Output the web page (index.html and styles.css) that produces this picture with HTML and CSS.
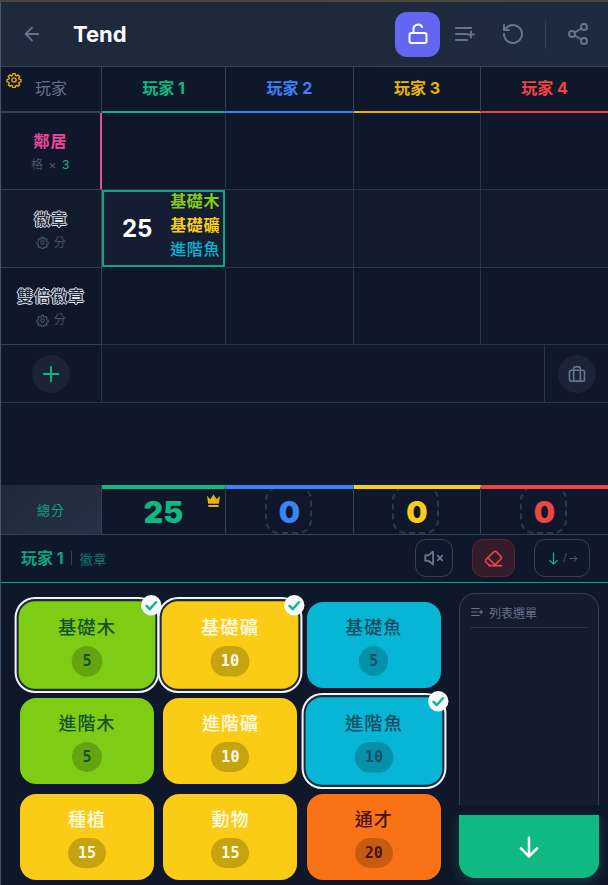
FILE: index.html
```html
<!DOCTYPE html>
<html lang="zh-Hant">
<head>
<meta charset="utf-8">
<title>Tend</title>
<link rel="stylesheet" href="styles.css">
</head>
<body>
<div class="app">
  <header class="topbar">
    <button class="icon-btn back"><svg viewBox="0 0 24 24" width="22" height="22" class="stroke"><path d="M19 12H5M12 19l-7-7 7-7"/></svg></button>
    <h1 class="title">Tend</h1>
    <button class="lock"><svg viewBox="0 0 24 24" width="24" height="24" class="stroke white"><rect x="3.500" y="11" width="17" height="10" rx="2"/><path d="M7.500 11V7a4.500 4.500 0 0 1 8.600-1.800"/></svg></button>
    <button class="icon-btn list"><svg viewBox="0 0 24 24" width="24" height="24" class="stroke"><path d="M3 6h15M3 12h11M3 18h11M18 9.500v6M15 12.500h6"/></svg></button>
    <button class="icon-btn undo"><svg viewBox="0 0 24 24" width="24" height="24" class="stroke"><path d="M3 12a9 9 0 1 0 3-6.700L3 8"/><path d="M3 3v5h5"/></svg></button>
    <span class="bar-div"></span>
    <button class="icon-btn share"><svg viewBox="0 0 24 24" width="24" height="24" class="stroke"><circle cx="18" cy="5" r="3"/><circle cx="6" cy="12" r="3"/><circle cx="18" cy="19" r="3"/><path d="M8.600 13.500l6.800 4M15.400 6.500l-6.800 4"/></svg></button>
  </header>

  <div class="row head-row">
    <div class="cell corner">
      <svg class="gear-top" viewBox="0 0 24 24" width="16" height="16"><path d="M10.300 2.500h3.400l.5 2.700 1.700.7 2.300-1.500 2.400 2.400-1.500 2.300.7 1.700 2.700.5v3.400l-2.700.5-.7 1.700 1.500 2.300-2.400 2.400-2.300-1.500-1.700.7-.5 2.700h-3.400l-.5-2.700-1.700-.7-2.300 1.500-2.400-2.400 1.500-2.300-.7-1.700-2.700-.5v-3.400l2.700-.5.7-1.700-1.500-2.300 2.400-2.400 2.300 1.500 1.700-.7z"/><circle cx="12" cy="12" r="3.200"/></svg>
      <span>玩家</span>
    </div>
    <div class="cell ph c-green">玩家 1</div>
    <div class="cell ph c-blue">玩家 2</div>
    <div class="cell ph c-yellow">玩家 3</div>
    <div class="cell ph c-red">玩家 4</div>
  </div>

  <div class="row r1">
    <div class="cell label pink-edge">
      <div class="name pink">鄰居</div>
      <div class="sub">格 <i>×</i> <b>3</b></div>
    </div>
    <div class="cell"></div><div class="cell"></div><div class="cell"></div><div class="cell"></div>
  </div>

  <div class="row r2">
    <div class="cell label">
      <div class="name outline">徽章</div>
      <div class="sub"><svg class="mini-gear" viewBox="0 0 24 24" width="13" height="13"><path d="M10.300 2.500h3.400l.5 2.700 1.700.7 2.300-1.500 2.400 2.400-1.500 2.300.7 1.700 2.700.5v3.400l-2.700.5-.7 1.700 1.500 2.300-2.400 2.400-2.300-1.500-1.700.7-.5 2.700h-3.400l-.5-2.700-1.700-.7-2.300 1.500-2.400-2.400 1.500-2.300-.7-1.700-2.700-.5v-3.400l2.700-.5.7-1.700-1.500-2.300 2.400-2.400 2.300 1.500 1.700-.7z"/><circle cx="12" cy="12" r="3.200"/></svg> 分</div>
    </div>
    <div class="cell active">
      <span class="val">25</span>
      <div class="tags">
        <span class="t-green">基礎木</span>
        <span class="t-yellow">基礎礦</span>
        <span class="t-cyan">進階魚</span>
      </div>
    </div>
    <div class="cell"></div><div class="cell"></div><div class="cell"></div>
  </div>

  <div class="row r3">
    <div class="cell label">
      <div class="name outline">雙倍徽章</div>
      <div class="sub"><svg class="mini-gear" viewBox="0 0 24 24" width="13" height="13"><path d="M10.300 2.500h3.400l.5 2.700 1.700.7 2.300-1.500 2.400 2.400-1.500 2.300.7 1.700 2.700.5v3.400l-2.700.5-.7 1.700 1.500 2.300-2.400 2.400-2.300-1.500-1.700.7-.5 2.700h-3.400l-.5-2.700-1.700-.7-2.300 1.500-2.400-2.400 1.500-2.300-.7-1.700-2.700-.5v-3.400l2.700-.5.7-1.700-1.500-2.300 2.400-2.400 2.300 1.500 1.700-.7z"/><circle cx="12" cy="12" r="3.200"/></svg> 分</div>
    </div>
    <div class="cell"></div><div class="cell"></div><div class="cell"></div><div class="cell"></div>
  </div>

  <div class="row add-row">
    <div class="cell add-cell">
      <button class="round"><svg viewBox="0 0 24 24" width="22" height="22" class="stroke green"><path d="M12 4v16M4 12h16"/></svg></button>
    </div>
    <div class="add-mid"></div>
    <div class="add-end">
      <button class="round"><svg viewBox="0 0 24 24" width="20" height="20" class="stroke"><rect x="3" y="7.500" width="18" height="13" rx="2"/><path d="M8 7.500V5.500a2 2 0 0 1 2-2h4a2 2 0 0 1 2 2v2M8 7.500v13M16 7.500v13"/></svg></button>
    </div>
  </div>

  <div class="spacer"></div>

  <div class="row totals">
    <div class="cell total-label">總分</div>
    <div class="cell score s-green">25
      <svg class="crown" viewBox="0 0 16 15" width="15" height="14"><path d="M1 2l3.500 3.500L8 .5l3.500 5L15 2l-1.300 8.500H2.300z"/><rect x="2.300" y="11.800" width="11.400" height="2.200" rx=".5"/></svg>
    </div>
    <div class="cell score s-blue"><span class="dash"></span>0</div>
    <div class="cell score s-yellow"><span class="dash"></span>0</div>
    <div class="cell score s-red"><span class="dash"></span>0</div>
  </div>

  <div class="panel-head">
    <span class="pl">玩家 1</span>
    <span class="pl-div"></span>
    <span class="pl-cat">徽章</span>
    <button class="tool mute"><svg viewBox="0 0 24 24" width="22" height="22" class="stroke"><path d="M11 5L6 9H2.500v6H6l5 4z"/><path d="M16 9.500l5 5M21 9.500l-5 5"/></svg></button>
    <button class="tool eraser"><svg viewBox="0 0 24 24" width="19" height="19" class="stroke red"><path d="M7 21l-4.300-4.300c-1-1-1-2.500 0-3.400l9.600-9.600c1-1 2.500-1 3.400 0l5.600 5.600c1 1 1 2.500 0 3.400L13 21"/><path d="M22 21H7M5 11l9 9"/></svg></button>
    <button class="tool dir">
      <svg viewBox="0 0 24 24" width="15" height="15" class="stroke green"><path d="M12 3v18M6 15l6 6 6-6"/></svg>
      <span class="slash">/</span>
      <svg viewBox="0 0 24 24" width="9" height="9" class="stroke"><path d="M3 12h18M14 5l7 7-7 7"/></svg>
    </button>
  </div>

  <div class="board">
    <div class="cards">
      <div class="card lime on"><span class="lab">基礎木</span><span class="chip">5</span><span class="check"><svg viewBox="0 0 24 24" width="14" height="14"><path d="M4 13l5.500 5.500L20 7"/></svg></span></div>
      <div class="card gold on"><span class="lab">基礎礦</span><span class="chip">10</span><span class="check"><svg viewBox="0 0 24 24" width="14" height="14"><path d="M4 13l5.500 5.500L20 7"/></svg></span></div>
      <div class="card cyan"><span class="lab">基礎魚</span><span class="chip">5</span></div>
      <div class="card lime"><span class="lab">進階木</span><span class="chip">5</span></div>
      <div class="card gold"><span class="lab">進階礦</span><span class="chip">10</span></div>
      <div class="card cyan on"><span class="lab">進階魚</span><span class="chip">10</span><span class="check"><svg viewBox="0 0 24 24" width="14" height="14"><path d="M4 13l5.500 5.500L20 7"/></svg></span></div>
      <div class="card gold"><span class="lab">種植</span><span class="chip">15</span></div>
      <div class="card gold"><span class="lab">動物</span><span class="chip">15</span></div>
      <div class="card orange"><span class="lab">通才</span><span class="chip">20</span></div>
    </div>
    <div class="side">
      <div class="list-panel">
        <div class="list-title"><svg viewBox="0 0 24 24" width="14" height="14" class="stroke"><path d="M3 6h13M3 12h9M3 18h13M15 12h6M18.500 9.500l2.500 2.500-2.500 2.500"/></svg><span>列表選單</span></div>
      </div>
      <button class="go"><svg viewBox="0 0 24 24" width="30" height="30" class="stroke white"><path d="M12 4.500v15M5.500 13l6.500 6.500 6.500-6.500"/></svg></button>
    </div>
  </div>
</div>
</body>
</html>
```
FILE: styles.css
```css
* { box-sizing: border-box; }
html, body { margin: 0; height: 100%; background: #0f172a; }
body { font-family: Inter, "Noto Sans CJK TC", sans-serif; overflow: hidden; }
button { border: 0; background: none; padding: 0; margin: 0; display: flex; align-items: center; justify-content: center; }
.stroke { fill: none; stroke: #64748b; stroke-width: 2; stroke-linecap: round; stroke-linejoin: round; }
.stroke.white { stroke: #fff; }
.stroke.green { stroke: #10b981; }
.stroke.red { stroke: #ef4444; }

.app { width: 608px; height: 885px; display: flex; flex-direction: column; border-top: 2px solid #47463f; border-left: 1px solid #475569; background: #0f172a; overflow: hidden; }

.topbar { height: 65px; flex: none; display: flex; align-items: center; background: linear-gradient(90deg, #1e293b, #1e2a3d); border-bottom: 1px solid #3a4557; padding-left: 20px; }
.back { width: 22px; }
.title { margin: 0 0 0 30px; font-size: 22px; font-weight: 700; color: #f8fafc; flex: 1; line-height: 1; }
.lock { width: 45px; height: 45px; border-radius: 12px; background: #6366f1; }
.list { width: 24px; margin-left: 13px; }
.undo { width: 24px; margin-left: 24px; }
.bar-div { width: 1px; height: 29px; background: #334155; margin: 0 20px 0 20px; }
.share { width: 24px; margin-right: 18px; }

.row { display: grid; grid-template-columns: 101px 124px 128px 127px 127px; flex: none; }
.cell { border-right: 1px solid #293548; border-bottom: 1px solid #293548; position: relative; min-width: 0; }
.cell:last-child { border-right: 0; }

.head-row { height: 46px; }
.corner { display: flex; align-items: center; justify-content: center; color: #64748b; font-size: 16px; border-bottom: 2px solid #334155; border-right-color: #334155; padding-bottom: 4px; }
.gear-top { position: absolute; left: 5px; top: 5px; fill: none; stroke: #eab308; stroke-width: 2; stroke-linejoin: round; }
.ph { display: flex; align-items: center; justify-content: center; font-size: 16px; font-weight: 700; border-bottom-width: 2px; border-right-color: #334155; padding-bottom: 4px; }
.c-green { color: #10b981; border-bottom-color: #10b981; }
.c-blue { color: #3b82f6; border-bottom-color: #3b82f6; }
.c-yellow { color: #eab308; border-bottom-color: #eab308; }
.c-red { color: #ef4444; border-bottom-color: #ef4444; }

.r1 { height: 77px; }
.r2 { height: 78px; grid-template-rows: 78px; background: #111b2c; }
.r3 { height: 77px; }
.label { display: flex; flex-direction: column; align-items: center; justify-content: center; gap: 4px; border-bottom-color: #334155; border-right-color: #334155; }
.pink-edge { border-right: 2px solid #ec4899; }
.name { font-size: 16px; line-height: 24px; font-weight: 700; letter-spacing: 1px; }
.pink { color: #ec4899; }
.outline { color: #1e293b; text-shadow: 1px 0 0 #e2e8f0, -1px 0 0 #e2e8f0, 0 1px 0 #e2e8f0, 0 -1px 0 #e2e8f0; font-weight: 500; }
.sub { font-size: 12px; line-height: 16px; color: #475569; display: flex; align-items: center; gap: 5px; letter-spacing: .5px; }
.sub i { font-style: normal; }
.sub b { color: #10b981; font-weight: 400; }
.mini-gear { fill: none; stroke: #475569; stroke-width: 2; }

.active { outline: 2px solid #10a37f; outline-offset: -2px; background: #141d31; display: flex; align-items: center; justify-content: space-between; padding: 0 5px 8px 20px; border: 0; height: 77px; margin-right: 1px; }
.val { font-size: 24px; font-weight: 700; color: #fff; padding-top: 8px; }
.tags { display: flex; flex-direction: column; align-items: flex-end; font-size: 16px; line-height: 24px; font-weight: 500; letter-spacing: .6px; }
.t-green { color: #84cc16; font-weight: 700; }
.t-yellow { color: #facc15; font-weight: 700; }
.t-cyan { color: #06b6d4; }

.add-row { height: 58px; border-bottom: 1px solid #293548; grid-template-columns: 101px 442px 1fr; }
.add-cell { border-bottom: 0; border-right-color: #293548; display: flex; align-items: center; justify-content: center; }
.add-end { border-left: 1px solid #293548; display: flex; align-items: center; justify-content: center; padding-left: 0; }
.round { width: 38px; height: 38px; border-radius: 50%; background: #1a2436; }

.spacer { flex: 1; }

.totals { height: 50px; }
.totals .cell { border-bottom: 1px solid #334155; border-right-color: #334155; overflow: hidden; }
.total-label { background: linear-gradient(135deg, #1e293b, #263145); color: #10a37f; font-size: 13px; display: flex; align-items: center; justify-content: center; letter-spacing: 1px; }
.score { border-top: 4px solid; display: flex; align-items: center; justify-content: center; font-size: 30px; font-weight: 900; line-height: 1; background: #0f172a; }
.s-green { color: #10b981; border-top-color: #10b981; }
.s-blue { color: #3b82f6; border-top-color: #3b82f6; }
.s-yellow { color: #facc15; border-top-color: #facc15; }
.s-red { color: #ef4444; border-top-color: #ef4444; }
.crown { position: absolute; right: 4px; top: 5px; fill: #eab308; }
.dash { position: absolute; left: 50%; top: -3px; width: 47px; height: 48px; margin-left: -25px; border: 2px dashed #2b384c; border-radius: 14px; }

.panel-head { height: 48px; flex: none; display: flex; align-items: center; border-bottom: 1px solid #14a38b; padding-left: 20px; padding-bottom: 1px; background: #0f172a; }
.pl { font-size: 16px; font-weight: 700; color: #10a37f; padding-bottom: 3px; }
.pl-div { width: 1px; height: 14px; background: #334155; margin: 0 8px 0 7px; }
.pl-cat { font-size: 13px; color: #0f766e; flex: 1; letter-spacing: .5px; }
.tool { height: 38px; border-radius: 11px; border: 1px solid #334155; gap: 2px; }
.mute { width: 38px; }
.eraser { width: 43px; margin-left: 19px; background: #331c2b; border-color: #5b2733; }
.dir { width: 56px; margin-left: 19px; margin-right: 18px; }
.slash { color: #475569; font-size: 12px; }

.board { height: 302px; flex: none; display: flex; padding-left: 19px; }
.cards { width: 420px; flex: none; display: grid; grid-template-columns: repeat(3, 134px); grid-auto-rows: 86px; column-gap: 9.4px; row-gap: 10px; padding-top: 19px; }
.card { border-radius: 16px; display: flex; flex-direction: column; align-items: center; justify-content: center; gap: 5px; position: relative; }
.card.on { transform: scale(1.02); box-shadow: 0 0 0 2px #1e293b, 0 0 0 4px #f1f5f9; }
.lime { background: #7fcc14; color: #14532d; }
.gold { background: #facc15; color: #fffbe6; }
.cyan { background: #06b6d4; color: #164e63; }
.orange { background: #f97316; color: #431407; }
.lab { font-size: 18px; line-height: 26px; font-weight: 500; letter-spacing: 1px; }
.chip { min-width: 28px; height: 30px; padding: 0 10px; border-radius: 15px; background: rgba(0,0,0,.2); font-family: "DejaVu Sans Mono", monospace; font-weight: 700; font-size: 15px; display: flex; align-items: center; justify-content: center; }
.check { position: absolute; right: -6px; top: -6px; width: 20px; height: 20px; border-radius: 50%; background: #f8fafc; display: flex; align-items: center; justify-content: center; }
.check svg { fill: none; stroke: #10b981; stroke-width: 4; stroke-linecap: round; stroke-linejoin: round; }

.side { width: 140px; margin-left: 19px; padding-top: 10px; display: flex; flex-direction: column; height: 296px; }
.list-panel { height: 212px; border: 1px solid #334155; border-bottom: 0; border-radius: 16px 16px 0 0; background: #141c2e; padding: 9px 10px 0; flex: none; }
.list-title { display: flex; align-items: center; gap: 5px; font-size: 12px; color: #64748b; padding-bottom: 6px; border-bottom: 1px solid #293548; height: 25px; }
.go { margin-top: 10px; height: 63px; flex: none; background: #10b981; border-radius: 0 0 16px 16px; box-shadow: 0 4px 12px rgba(16,185,129,.25); }
```
